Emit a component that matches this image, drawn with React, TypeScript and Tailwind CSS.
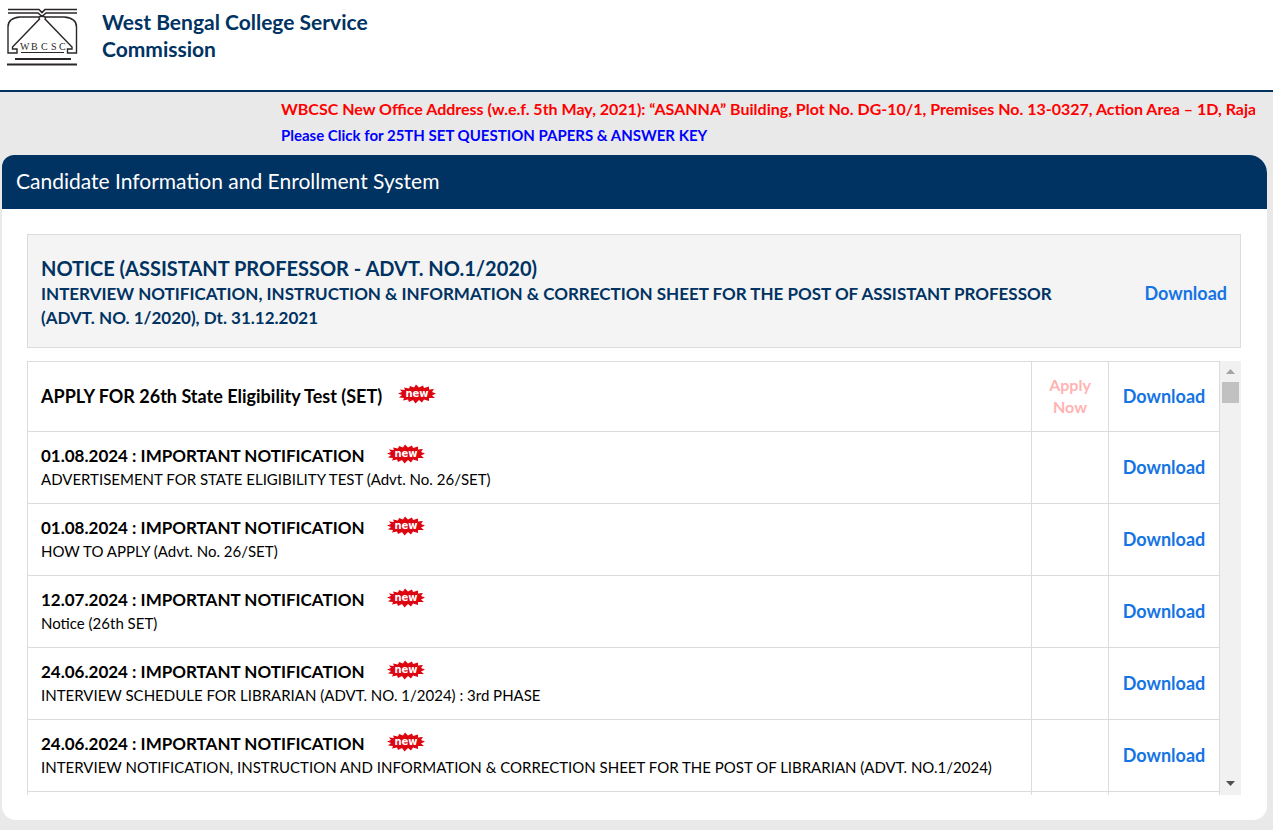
type Notice = {
  id: number;
  title: string;
  text?: string;
  applyNow?: boolean;
};

const notices: Notice[] = [
  { id: 1, title: 'APPLY FOR 26th State Eligibility Test (SET)', applyNow: true },
  {
    id: 2,
    title: '01.08.2024 : IMPORTANT NOTIFICATION',
    text: 'ADVERTISEMENT FOR STATE ELIGIBILITY TEST (Advt. No. 26/SET)',
  },
  {
    id: 3,
    title: '01.08.2024 : IMPORTANT NOTIFICATION',
    text: 'HOW TO APPLY (Advt. No. 26/SET)',
  },
  {
    id: 4,
    title: '12.07.2024 : IMPORTANT NOTIFICATION',
    text: 'Notice (26th SET)',
  },
  {
    id: 5,
    title: '24.06.2024 : IMPORTANT NOTIFICATION',
    text: 'INTERVIEW SCHEDULE FOR LIBRARIAN (ADVT. NO. 1/2024) : 3rd PHASE',
  },
  {
    id: 6,
    title: '24.06.2024 : IMPORTANT NOTIFICATION',
    text: 'INTERVIEW NOTIFICATION, INSTRUCTION AND INFORMATION & CORRECTION SHEET FOR THE POST OF LIBRARIAN (ADVT. NO.1/2024)',
  },
];

function Logo() {
  return (
    <svg width="72" height="60" viewBox="0 0 72 60" fill="none" stroke="#2b2727" className="shrink-0">
      <path d="M2 1.500H33L36 4.500L39 1.500H71" strokeWidth="1.6" />
      <path d="M2 5H32L36 8.500L40 5H71" strokeWidth="1.6" />
      <path
        d="M36 8L33 9H14C7 9.500 2 12 2 19V45H11V41H6.500V39L33.500 11L32.500 9M36 8L39 9H58C65 9.500 70.500 12 70.500 19V45H61.500V41H66V39L39 11L40 9"
        strokeWidth="1.4"
      />
      <path d="M15 44.500H58" strokeWidth="1.200" />
      <path d="M9 51H65" strokeWidth="2" />
      <path d="M1 56.500H71" strokeWidth="2" />
      <text
        x="14 25 35 45 53"
        y="41.500"
        fontSize="10"
        fill="#2b2727"
        stroke="none"
        fontFamily="'Liberation Serif', serif"
      >
        WBCSC
      </text>
    </svg>
  );
}

function NewBadge() {
  return (
    <svg width="38" height="20" viewBox="0 0 38 20" className="mb-1 shrink-0" role="img" aria-label="new">
      <path
        fill="#dc0510"
        d="M2 5.500L7 6L6 3.500L11 4.500L12 2L16 3.500L18 0.500L21 3.500L25 1.500L26 4L31 2.500L31 5.500L36 5L34 8L38 9.500L34 11.500L37 14L31 14L31 17L26 15.500L24 18.500L21 16L17.500 19.500L15 16L11 18L10 15.500L5 16.500L6 14L1 13.500L4 11L0 9.500L4 8Z"
      />
      <text
        x="19"
        y="12.500"
        textAnchor="middle"
        fontSize="10"
        fontWeight="700"
        fill="#fff"
        fontFamily="'DejaVu Sans', sans-serif"
      >
        new
      </text>
    </svg>
  );
}

function DownloadLink() {
  return (
    <a href="#download" className="text-lg leading-6 font-bold text-[#1474e4]">
      Download
    </a>
  );
}

function ScrollRail() {
  return (
    <div className="flex w-[21px] shrink-0 flex-col items-center bg-[#f1f1f1]">
      <button type="button" aria-label="Scroll up" className="flex h-[21px] w-full items-center justify-center">
        <svg width="9" height="5" viewBox="0 0 9 5">
          <path d="M4.500 0L9 5H0Z" fill="#a3a3a3" />
        </svg>
      </button>
      <div className="h-[21px] w-[17px] bg-[#c1c1c1]" />
      <button type="button" aria-label="Scroll down" className="mt-auto flex h-6 w-full items-center justify-center">
        <svg width="9" height="5" viewBox="0 0 9 5">
          <path d="M0 0H9L4.500 5Z" fill="#505050" />
        </svg>
      </button>
    </div>
  );
}

export default function App() {
  return (
    <div className="min-h-screen bg-[#e9e9e9] pb-2.5 font-['Lato','Open_Sans',sans-serif]">
      {/* Header */}
      <header className="flex h-[92px] gap-6 border-b-2 border-[#003262] bg-white pt-2 pl-1.5">
        <Logo />
        <h1 className="w-72 text-[21px] leading-[27px] font-bold text-[#003262]">
          West Bengal College Service Commission
        </h1>
      </header>

      {/* Announcements */}
      <div className="mr-[18px] ml-[281px] overflow-hidden pt-1 pb-[7px] font-bold whitespace-nowrap">
        <p className="text-[16px] leading-[26px] text-[#ff0000]">
          WBCSC New Office Address (w.e.f. 5th May, 2021): “ASANNA” Building, Plot No. DG-10/1, Premises No. 13-0327,
          Action Area – 1D, Rajarhat
        </p>
        <a href="#answer-key" className="block text-[15px] leading-[26px] text-[#0000ff]">
          Please Click for 25TH SET QUESTION PAPERS &amp; ANSWER KEY
        </a>
      </div>

      {/* Main panel */}
      <main className="mr-1.5 ml-0.5 overflow-hidden rounded-tl-xl rounded-tr-[18px] rounded-b-[14px] bg-white">
        <h2 className="bg-[#003262] px-3.5 pt-3 pb-3.5 text-[21px] leading-7 text-white">
          Candidate Information and Enrollment System
        </h2>

        <div className="pt-[25px] pr-[26px] pb-[25px] pl-[25px]">
          <section className="mb-[13px] flex items-center justify-between border border-[#dcdcdc] bg-[#f4f4f4] px-[13px] pt-[21px] pb-[17px]">
            <div className="max-w-[1040px] text-[#003262]">
              <h3 className="mb-0.5 text-[20px] leading-6 font-bold">NOTICE (ASSISTANT PROFESSOR - ADVT. NO.1/2020)</h3>
              <p className="text-[17px] leading-6 font-bold">
                INTERVIEW NOTIFICATION, INSTRUCTION &amp; INFORMATION &amp; CORRECTION SHEET FOR THE POST OF ASSISTANT
                PROFESSOR (ADVT. NO. 1/2020), Dt. 31.12.2021
              </p>
            </div>
            <DownloadLink />
          </section>

          <div className="flex h-[434px] overflow-hidden">
            <div className="min-w-0 flex-1 overflow-hidden">
              <table className="w-full border-collapse">
                <tbody>
                  {notices.map((notice) => (
                    <tr key={notice.id} className={notice.text ? 'h-[72px]' : 'h-[70px]'}>
                      <td className="border border-[#dcdcdc] px-[13px] pb-0.5">
                        <div className={`flex items-center ${notice.text ? 'gap-[22px]' : 'gap-4'}`}>
                          <span
                            className={`leading-6 font-bold text-black ${notice.text ? 'text-[17px]' : 'text-[18px]'}`}
                          >
                            {notice.title}
                          </span>
                          <NewBadge />
                        </div>
                        {notice.text && <p className="text-[15px] leading-[22px] text-black">{notice.text}</p>}
                      </td>
                      <td className="w-[77px] border border-[#dcdcdc] px-2 pb-0.5 text-center">
                        {notice.applyNow && (
                          <span className="block text-[16px] leading-[22px] font-bold text-[#ffb3b3]">Apply Now</span>
                        )}
                      </td>
                      <td className="w-[111px] border border-[#dcdcdc] text-center">
                        <DownloadLink />
                      </td>
                    </tr>
                  ))}
                  <tr className="h-[72px]">
                    <td className="border border-[#dcdcdc]" />
                    <td className="border border-[#dcdcdc]" />
                    <td className="border border-[#dcdcdc]" />
                  </tr>
                </tbody>
              </table>
            </div>
            <ScrollRail />
          </div>
        </div>
      </main>
    </div>
  );
}
